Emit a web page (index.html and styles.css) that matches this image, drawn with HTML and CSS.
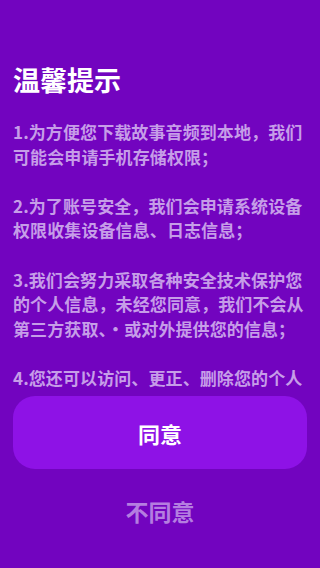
FILE: index.html
```html
<!DOCTYPE html>
<html lang="zh-CN">
<head>
    <meta charset="UTF-8">
    <title>温馨提示</title>
    <link rel="stylesheet" href="styles.css">
</head>
<body>

<div class="page">
    <h1 class="title">温馨提示</h1>

    <div class="content">
        <p>1.为方便您下载故事音频到本地，我们可能会申请手机存储权限；</p>
        <p>2.为了账号安全，我们会申请系统设备权限收集设备信息、日志信息；</p>
        <p>3.我们会努力采取各种安全技术保护您的个人信息，未经您同意，我们不会从第三方获取、・或对外提供您的信息；</p>
        <p>4.您还可以访问、更正、删除您的个人信息，注销账号，以及设置隐私功能。</p>
    </div>

    <button class="agree">同意</button>
    <div class="refuse">不同意</div>
</div>

</body>
</html>
```

FILE: styles.css
```css
body {
  margin: 0;
  background: #7204bf;
  font-family: "Noto Sans CJK SC", "Noto Sans", sans-serif;
}

.page {
  height: 568px;
  display: flex;
  flex-direction: column;
  padding-bottom: 15px;
  box-sizing: border-box;
}

.title {
  margin: 62px 13px 0;
  font-size: 27px;
  line-height: 36px;
  font-weight: bold;
  color: #fff;
}

.content {
  flex: 1;
  overflow: hidden;
  margin-top: 22px;
  padding: 0 13px;
  font-size: 17px;
  line-height: 24.6px;
  letter-spacing: 0.1px;
  font-weight: bold;
  color: #c69de8;
}

.content p {
  margin: 0 0 24.6px;
}

.agree {
  flex-shrink: 0;
  margin: 4px 13px 0;
  height: 73px;
  border: none;
  border-radius: 22px;
  background: #8e12e6;
  color: #fff;
  font-family: inherit;
  font-size: 22px;
  font-weight: bold;
}

.refuse {
  flex-shrink: 0;
  height: 84px;
  line-height: 84px;
  text-align: center;
  font-size: 23px;
  font-weight: bold;
  color: #b47ee0;
}
```
